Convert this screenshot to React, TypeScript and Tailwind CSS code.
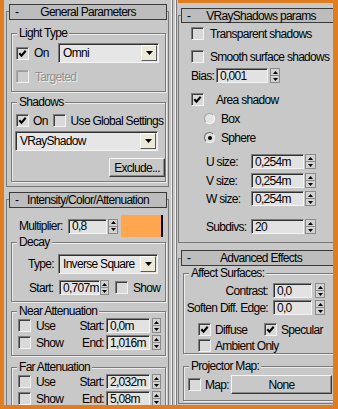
import React from "react";

const sunken =
  "border border-t-[#7c7c7c] border-l-[#7c7c7c] border-b-[#f4f4f4] border-r-[#f4f4f4] shadow-[inset_1px_1px_0_#303030]";

const Check = ({ on = false, dim = false }: { on?: boolean; dim?: boolean }) => (
  <span
    className={`w-[13px] h-[13px] shrink-0 flex items-center justify-center border ${
      dim
        ? "border-t-[#a8a8a8] border-l-[#a8a8a8] border-b-[#f4f4f4] border-r-[#f4f4f4] bg-[#cdcdcd] shadow-[inset_1px_1px_0_#9a9a9a]"
        : "border-t-[#7c7c7c] border-l-[#7c7c7c] border-b-[#f4f4f4] border-r-[#f4f4f4] bg-[#d9d9d9] shadow-[inset_1px_1px_0_#404040]"
    }`}
  >
    {on && (
      <svg width="9" height="9" viewBox="0 0 9 9">
        <path d="M1.3 4.2 L3.5 6.6 L7.7 1.8" fill="none" stroke="#000" strokeWidth="2.1" />
      </svg>
    )}
  </span>
);

const Radio = ({ on = false }: { on?: boolean }) => (
  <span
    className={`w-[11px] h-[11px] rounded-full shrink-0 flex items-center justify-center border ${
      on
        ? "border-t-[#6c6c6c] border-l-[#6c6c6c] border-b-[#f4f4f4] border-r-[#f4f4f4] bg-[#dcdcdc]"
        : "border-t-[#a0a0a0] border-l-[#a0a0a0] border-b-[#f8f8f8] border-r-[#f8f8f8] bg-[#e4e4e4]"
    }`}
  >
    {on && <span className="w-[4px] h-[4px] rounded-full bg-black" />}
  </span>
);

const Spin = ({ cls = "" }: { cls?: string }) => (
  <span className={`h-[15px] shrink-0 flex flex-col border border-[#8a8a8a] bg-[#d2d2d2] ${cls}`}>
    <span className="flex-1 flex items-center justify-center">
      <svg width="5" height="3" viewBox="0 0 5 3">
        <path d="M2.5 0 L5 3 L0 3Z" fill="#000" />
      </svg>
    </span>
    <span className="h-px bg-[#8a8a8a]" />
    <span className="flex-1 flex items-center justify-center">
      <svg width="5" height="3" viewBox="0 0 5 3">
        <path d="M0 0 L5 0 L2.5 3Z" fill="#000" />
      </svg>
    </span>
  </span>
);

const Field = ({ v, cls = "" }: { v: string; cls?: string }) => (
  <span className={`h-[15px] shrink-0 flex items-center pl-[3px] overflow-hidden whitespace-nowrap bg-[#e2e2e2] ${sunken} ${cls}`}>
    {v}
  </span>
);

const Drop = ({ v, cls = "" }: { v: string; cls?: string }) => (
  <div className={`h-[20px] shrink-0 flex items-center pl-[4px] pr-[1px] bg-[#e6e6e6] ${sunken} ${cls}`}>
    <span className="flex-1 whitespace-nowrap">{v}</span>
    <span className="w-[16px] h-[16px] flex items-center justify-center bg-[#ece9d8] border border-t-[#ffffff] border-l-[#ffffff] border-b-[#5a5a5a] border-r-[#5a5a5a]">
      <svg width="7" height="4" viewBox="0 0 7 4">
        <path d="M0 0H7L3.5 4Z" fill="#000" />
      </svg>
    </span>
  </div>
);

const Btn = ({ children, cls = "" }: { children: React.ReactNode; cls?: string }) => (
  <div
    className={`flex items-center justify-center bg-[#c8c8c8] border border-t-[#f6f6f6] border-l-[#f6f6f6] border-b-[#3a3a3a] border-r-[#3a3a3a] shadow-[inset_-1px_-1px_0_#8a8a8a] ${cls}`}
  >
    {children}
  </div>
);

// etched group box, like the old win32 frames
const Group = ({ title, cls = "", children }: { title: string; cls?: string; children: React.ReactNode }) => (
  <fieldset className={`border border-[#7a7a7a] shadow-[inset_1px_1px_0_#ececec,1px_1px_0_#ececec] ${cls}`}>
    <legend className="ml-[5px] px-[2px] leading-[14px] whitespace-nowrap bg-[#c8c8c8]">{title}</legend>
    {children}
  </fieldset>
);

const Head = ({ title, cls = "" }: { title: string; cls?: string }) => (
  <div className={`relative z-10 grid grid-cols-[16px_1fr_16px] items-center bg-[#bdbdbd] border border-[#3a3a3a] ${cls}`}>
    <span className="pl-[5px]">-</span>
    <span className="text-center whitespace-nowrap">{title}</span>
    <span />
  </div>
);

const AttRow = ({ check, label, v, cls = "" }: { check: string; label: string; v: string; cls?: string }) => (
  <div className={`flex items-center h-[15px] pl-[6px] ${cls}`}>
    <div className="w-[56px] flex items-center">
      <Check />
      <span className="ml-[5px]">{check}</span>
    </div>
    <span className="w-[32px] text-right pr-[2px]">{label}</span>
    <Field v={v} cls="w-[44px]" />
    <Spin cls="w-[9px] ml-[2px]" />
  </div>
);

const SizeRow = ({ label, v, cls = "" }: { label: string; v: string; cls?: string }) => (
  <div className={`flex items-center h-[15px] pl-[27px] ${cls}`}>
    <span className="w-[45px]">{label}</span>
    <Field v={v} cls="w-[53px]" />
    <Spin cls="w-[11px] ml-[1px]" />
  </div>
);

const LeftColumn = () => (
  <div className="w-[167px] shrink-0 pl-[2px] pt-[4px] flex flex-col overflow-hidden">
    <Head title="General Parameters" cls="h-[17px] w-[158px] ml-[3px]" />
    <div className="w-[163px] -mt-[9px] pt-[8px] border border-[#7a7a7a]">
      <Group title="Light Type" cls="mt-[6px] ml-[4px] w-[155px] pb-[8px]">
        <div className="mt-[3px] flex items-center h-[20px] pl-[4px]">
          <Check on />
          <span className="ml-[5px]">On</span>
          <Drop v="Omni" cls="ml-auto mr-[6px] w-[101px]" />
        </div>
        <div className="mt-[7px] flex items-center h-[13px] pl-[4px]">
          <Check dim />
          <span className="ml-[6px] text-[#8e8e8e] [text-shadow:1px_1px_0_#f0f0f0]">Targeted</span>
        </div>
      </Group>
      <Group title="Shadows" cls="mt-[3px] ml-[4px] w-[155px] pb-[4px]">
        <div className="mt-[5px] flex items-center h-[13px] pl-[4px]">
          <Check on />
          <span className="ml-[4px]">On</span>
          <span className="ml-[5px]">
            <Check />
          </span>
          <span className="ml-[5px] whitespace-nowrap">Use Global Settings</span>
        </div>
        <Drop v="VRayShadow" cls="mt-[4px] ml-[3px] w-[143px]" />
        <div className="mt-[7px] flex justify-end">
          <Btn cls="w-[56px] h-[19px]">Exclude...</Btn>
        </div>
      </Group>
      <div className="h-[4px]" />
    </div>

    <Head title="Intensity/Color/Attenuation" cls="mt-[5px] h-[17px] w-[158px] ml-[3px]" />
    <div className="w-[163px] h-[260px] -mt-[9px] pt-[8px] border border-[#7a7a7a]">
      <div className="mt-[7px] flex items-center h-[22px] pl-[12px]">
        <span className="w-[49px]">Multiplier:</span>
        <Field v="0,8" cls="w-[39px]" />
        <Spin cls="w-[10px] ml-[1px]" />
        <span className="ml-[3px] w-[42px] h-[22px] bg-[#ffa64f] border-r-[2px] border-black" />
      </div>
      <Group title="Decay" cls="-mt-[2px] ml-[4px] w-[155px] pb-[6px]">
        <div className="mt-[5px] flex items-center h-[20px] pl-[16px]">
          <span className="w-[30px]">Type:</span>
          <Drop v="Inverse Square" cls="w-[100px]" />
        </div>
        <div className="mt-[6px] flex items-center h-[15px] pl-[17px]">
          <span className="w-[30px]">Start:</span>
          <Field v="0,707m" cls="w-[41px]" />
          <Spin cls="w-[9px]" />
          <span className="ml-[6px]">
            <Check />
          </span>
          <span className="ml-[5px]">Show</span>
        </div>
      </Group>
      <Group title="Near Attenuation" cls="mt-[2px] ml-[4px] w-[155px] pb-[5px]">
        <AttRow check="Use" label="Start:" v="0,0m" />
        <AttRow check="Show" label="End:" v="1,016m" cls="mt-[2px]" />
      </Group>
      <Group title="Far Attenuation" cls="mt-[4px] ml-[4px] w-[155px] pb-[5px]">
        <AttRow check="Use" label="Start:" v="2,032m" />
        <AttRow check="Show" label="End:" v="5,08m" cls="mt-[2px]" />
      </Group>
    </div>
  </div>
);

const Separator = () => (
  <div className="w-[7px] shrink-0 flex">
    <span className="w-px bg-[#efefef]" />
    <span className="w-px bg-[#7a7a7a]" />
    <span className="w-[2px]" />
    <span className="w-px bg-[#efefef]" />
    <span className="w-px bg-[#7a7a7a]" />
    <span className="w-px" />
  </div>
);

const RightColumn = () => (
  <div className="flex-1 min-w-0 border-t-[3px] border-[#e17d1f] overflow-hidden flex flex-col">
    <Head title="VRayShadows params" cls="mt-[5px] h-[15px] w-[160px] ml-[3px]" />
    <div className="w-[170px] -mt-[8px] pt-[7px] border border-[#7a7a7a]">
      <div className="mt-[4px] flex items-center h-[13px] pl-[12px]">
        <Check />
        <span className="ml-[6px]">Transparent shadows</span>
      </div>
      <div className="mt-[10px] flex items-center h-[13px] pl-[12px]">
        <Check />
        <span className="ml-[6px] whitespace-nowrap">Smooth surface shadows</span>
      </div>
      <div className="mt-[5px] flex items-center h-[15px] pl-[12px]">
        <span className="w-[25px]">Bias:</span>
        <Field v="0,001" cls="w-[52px]" />
        <Spin cls="w-[10px] ml-[2px]" />
      </div>
      <div className="mt-[10px] flex items-center h-[13px] pl-[12px]">
        <Check on />
        <span className="ml-[12px]">Area shadow</span>
      </div>
      <div className="mt-[7px] flex items-center h-[11px] pl-[25px]">
        <Radio />
        <span className="ml-[6px]">Box</span>
      </div>
      <div className="mt-[8px] flex items-center h-[11px] pl-[25px]">
        <Radio on />
        <span className="ml-[6px]">Sphere</span>
      </div>
      <SizeRow label="U size:" v="0,254m" cls="mt-[11px]" />
      <SizeRow label="V size:" v="0,254m" cls="mt-[4px]" />
      <SizeRow label="W size:" v="0,254m" cls="mt-[3px]" />
      <SizeRow label="Subdivs:" v="20" cls="mt-[13px]" />
      <div className="h-[8px]" />
    </div>

    <Head title="Advanced Effects" cls="mt-[7px] h-[16px] w-[160px] ml-[3px]" />
    <div className="w-[170px] -mt-[8px] pt-[7px] border border-[#7a7a7a]">
      <Group title="Affect Surfaces:" cls="ml-[4px] w-[170px] pb-[1px]">
        <div className="mt-[3px] flex items-center h-[15px]">
          <span className="w-[89px] text-right pr-[5px] whitespace-nowrap">Contrast:</span>
          <Field v="0,0" cls="w-[39px]" />
          <Spin cls="w-[10px] ml-[3px]" />
        </div>
        <div className="mt-[2px] flex items-center h-[15px]">
          <span className="w-[89px] text-right pr-[5px] whitespace-nowrap">Soften Diff. Edge:</span>
          <Field v="0,0" cls="w-[39px]" />
          <Spin cls="w-[10px] ml-[3px]" />
        </div>
        <div className="mt-[8px] flex items-center h-[13px] pl-[14px]">
          <div className="w-[66px] flex items-center">
            <Check on />
            <span className="ml-[4px]">Diffuse</span>
          </div>
          <Check on />
          <span className="ml-[4px]">Specular</span>
        </div>
        <div className="mt-[3px] flex items-center h-[13px] pl-[14px]">
          <Check />
          <span className="ml-[4px]">Ambient Only</span>
        </div>
      </Group>
      <Group title="Projector Map:" cls="mt-[5px] ml-[4px] w-[170px] pb-[6px]">
        <div className="mt-[2px] flex items-center h-[19px] pl-[4px]">
          <Check />
          <span className="ml-[4px] w-[26px]">Map:</span>
          <Btn cls="w-[101px] h-[19px]">None</Btn>
        </div>
      </Group>
      <div className="h-[2px]" />
    </div>
  </div>
);

export default function App() {
  return (
    <div className="w-[338px] h-[409px] flex flex-col bg-[#c8c8c8] text-black text-[12px] leading-[14px] tracking-[-0.7px] font-['Liberation_Sans',Arial,sans-serif] overflow-hidden">
      <div className="h-[405px] flex border-l-[4px] border-r-[5px] border-[#e17d1f]">
        <LeftColumn />
        <Separator />
        <RightColumn />
      </div>
      <div className="h-[4px] bg-[#e17d1f]" />
    </div>
  );
}
